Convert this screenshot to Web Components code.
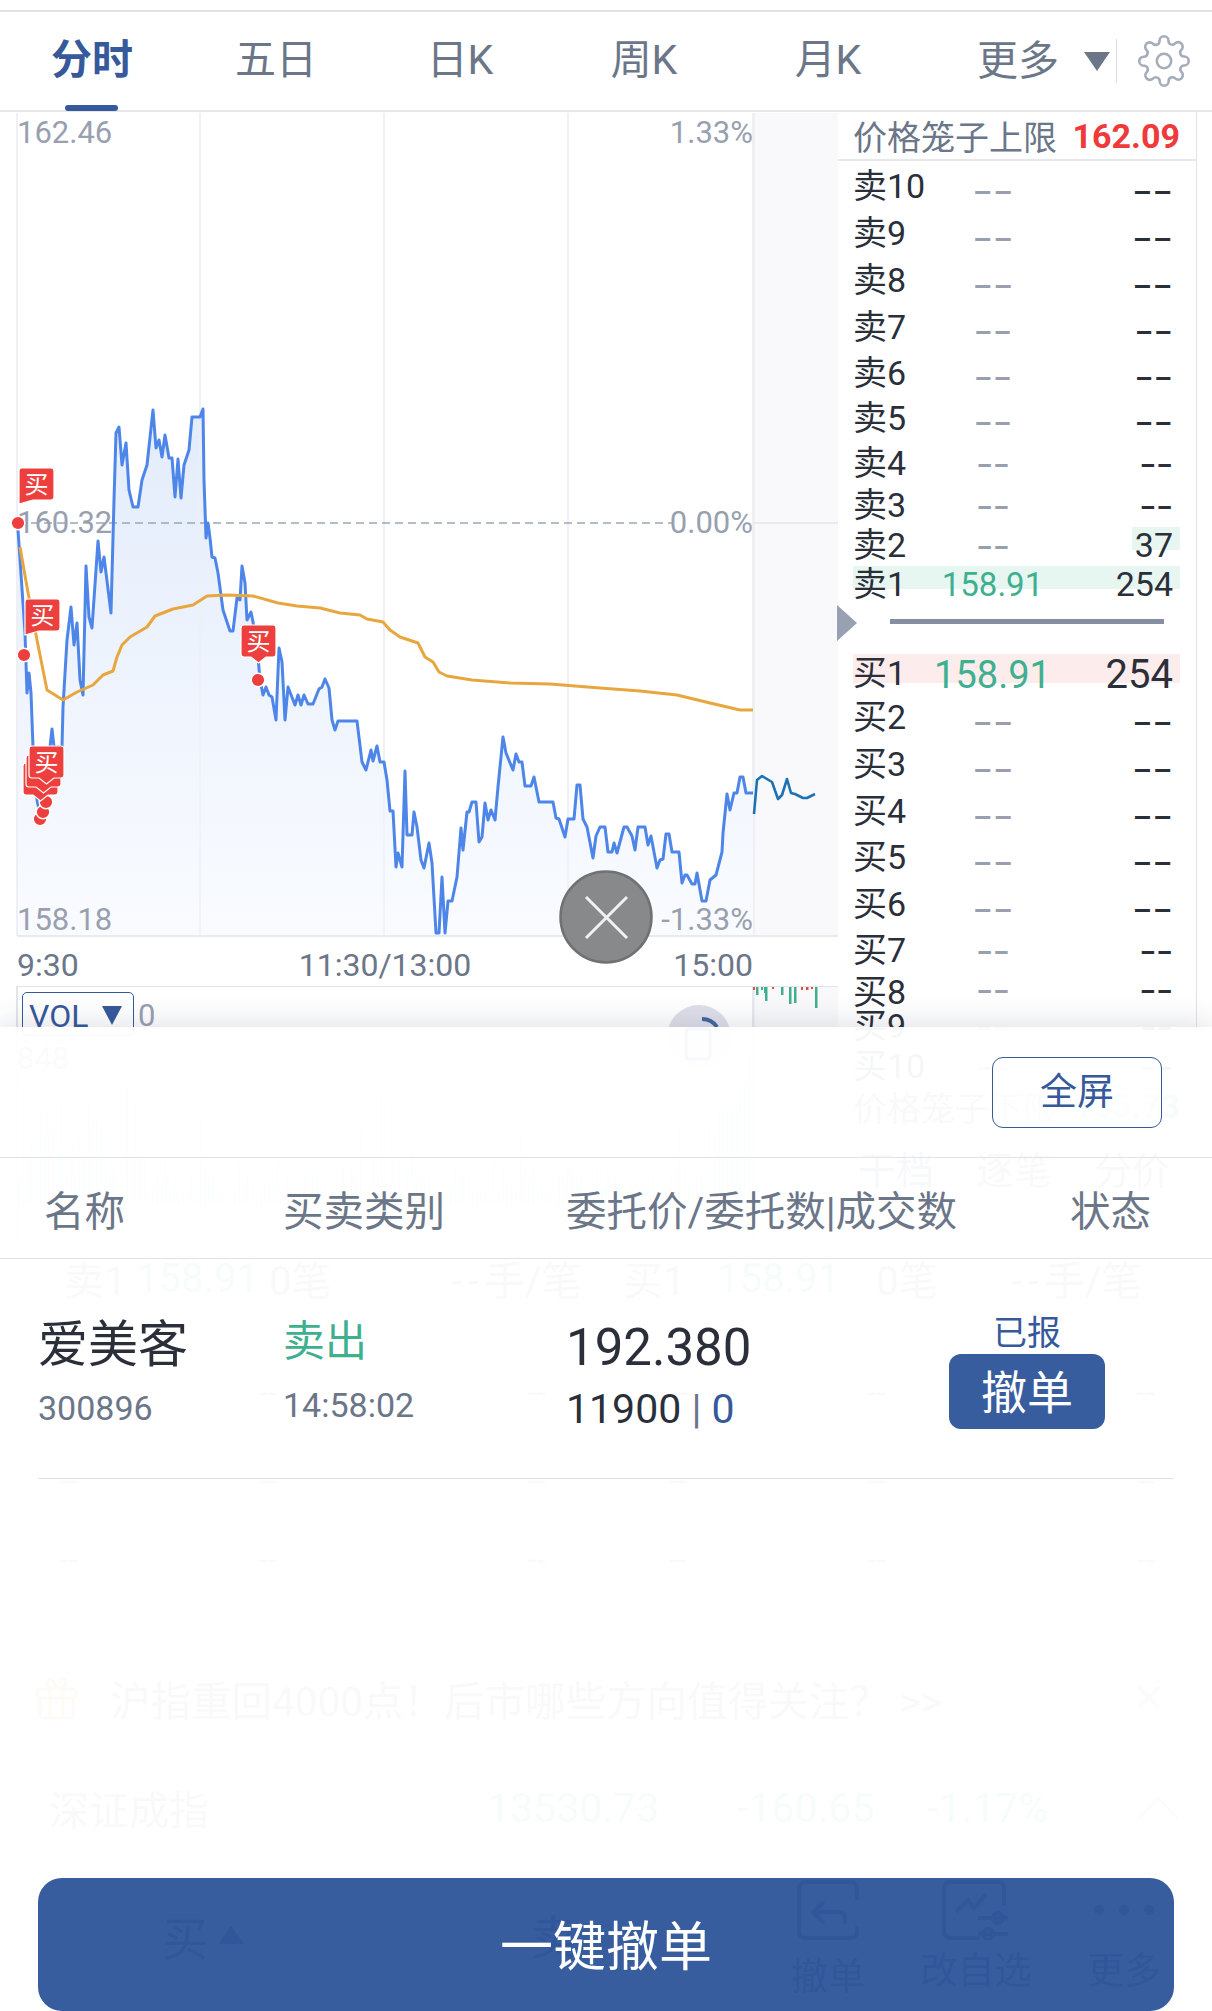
<!DOCTYPE html>
<html lang="zh">
<head>
<meta charset="utf-8">
<title>分时</title>
<style>
  html, body { margin: 0; padding: 0; background: #fff; }
  body { font-family: Roboto, "Noto Sans CJK SC", sans-serif; color: #2a2f3a; }
</style>
</head>
<body>
<stock-page>
  <chart-tabs></chart-tabs>
  <div slot="main">
    <trend-chart></trend-chart>
    <order-book></order-book>
  </div>
  <div slot="under">
    <queue-row></queue-row>
    <dash-row color="#6b7689" h="88"></dash-row>
    <dash-row color="#e24a4a" h="88"></dash-row>
    <dash-row color="#6b7689" h="70"></dash-row>
    <news-bar></news-bar>
    <index-row></index-row>
  </div>
  <close-fab slot="over"></close-fab>
  <order-sheet slot="over"></order-sheet>
</stock-page>

<script>
const BLUE = '#35599b';
const GREEN = '#3fb08f';
const GRAY = '#6b7689';

class StockPage extends HTMLElement {
    constructor() {
        super();
        this.attachShadow({ mode: 'open' });
    }

    connectedCallback() {
        this.shadowRoot.innerHTML = `
      <style>
        :host { display: block; position: relative; width: 1212px; height: 2011px; overflow: hidden; background: #fff; }
        .top { height: 10px; border-bottom: 2px solid #e2e2e2; }
      </style>
      <div class="top"></div>
      <slot></slot>
      <slot name="main"></slot>
      <slot name="under"></slot>
      <slot name="over"></slot>
    `;
        const main = this.querySelector('[slot="main"]');
        main.style.cssText = 'display:flex;height:1128px;';
    }
}

class ChartTabs extends HTMLElement {
    constructor() {
        super();
        this.attachShadow({ mode: 'open' });
    }

    connectedCallback() {
        const tabs = ['分时', '五日', '日K', '周K', '月K'];
        this.shadowRoot.innerHTML = `
      <style>
        :host { display: flex; align-items: center; height: 98px; border-bottom: 2px solid #e6e6e6; font-size: 41px; color: ${GRAY}; }
        .tab { width: 184px; text-align: center; position: relative; line-height: 98px; height: 98px; margin-top: -2px; }
        .tab.on { color: ${BLUE}; font-weight: 700; font-size: 41px; }
        .tab.on::after { content: ''; position: absolute; left: 65px; bottom: -2px; width: 53px; height: 6px; border-radius: 3px; background: ${BLUE}; }
        .more { margin-left: 57px; margin-top: -9px; }
        .tri { width: 0; height: 0; margin-left: 25px; border-left: 13px solid transparent; border-right: 13px solid transparent; border-top: 19px solid ${GRAY}; }
        .div { width: 1px; height: 44px; background: #ddd; margin-left: 6px; }
        svg { margin-left: 20px; margin-top: -1px; }
      </style>
      ${tabs.map((t, i) => `<div class="tab ${i === 0 ? 'on' : ''}">${t}</div>`).join('')}
      <div class="more">更多</div>
      <div class="tri"></div>
      <div class="div"></div>
      <svg width="54" height="54" viewBox="0 0 24 24" fill="none" stroke="#a6adba" stroke-width="1.15">
        <circle cx="12" cy="12" r="3.2"></circle>
        <path d="M19.4 15a1.65 1.65 0 0 0 .33 1.82l.06.06a2 2 0 0 1 0 2.83 2 2 0 0 1-2.83 0l-.06-.06a1.65 1.65 0 0 0-1.82-.33 1.65 1.65 0 0 0-1 1.51V21a2 2 0 0 1-2 2 2 2 0 0 1-2-2v-.09A1.65 1.65 0 0 0 9 19.4a1.65 1.65 0 0 0-1.82.33l-.06.06a2 2 0 0 1-2.83 0 2 2 0 0 1 0-2.83l.06-.06a1.65 1.65 0 0 0 .33-1.82 1.65 1.65 0 0 0-1.51-1H3a2 2 0 0 1-2-2 2 2 0 0 1 2-2h.09A1.65 1.65 0 0 0 4.6 9a1.65 1.65 0 0 0-.33-1.82l-.06-.06a2 2 0 0 1 0-2.83 2 2 0 0 1 2.83 0l.06.06a1.65 1.65 0 0 0 1.82.33H9a1.65 1.65 0 0 0 1-1.51V3a2 2 0 0 1 2-2 2 2 0 0 1 2 2v.09a1.65 1.65 0 0 0 1 1.51 1.65 1.65 0 0 0 1.82-.33l.06-.06a2 2 0 0 1 2.83 0 2 2 0 0 1 0 2.83l-.06.06a1.65 1.65 0 0 0-.33 1.82V9a1.65 1.65 0 0 0 1.51 1H21a2 2 0 0 1 2 2 2 2 0 0 1-2 2h-.09a1.65 1.65 0 0 0-1.51 1z"></path>
      </svg>
    `;
    }
}

const PRICE_LINE = '18,523 18,530 25,633 27,693 29,673 31,693 33,747 37,800 40,815 45,790 50,747 52,729 54,747 62,747 63,707 67,640 71,607 74,645 77,623 80,680 83,695 86,566 89,617 92,628 98,541 101,572 104,557 111,613 114,500 116,433 119,427 122,465 126,443 129,490 133,507 138,507 142,480 147,465 153,410 156,448 159,440 162,457 165,435 169,458 172,458 175,497 178,459 181,498 184,465 189,450 192,417 200,417 203,409 204,480 206,538 208,523 210,538 212,557 215,558 218,573 223,610 230,631 233,631 237,598 240,600 242,566 245,583 247,620 251,612 253,622 258,657 260,680 263,695 266,687 269,695 272,697 276,720 279,648 282,662 285,720 288,687 295,705 298,695 301,705 304,695 308,704 313,704 319,689 322,687 325,679 329,688 332,720 335,730 338,721 357,721 362,762 366,770 371,750 373,761 377,746 380,762 384,762 387,780 390,811 393,811 396,867 398,853 402,867 405,771 407,835 412,835 414,812 417,827 421,860 424,868 429,843 432,863 436,933 439,933 442,877 445,933 448,901 452,901 457,877 461,828 463,850 467,812 469,812 472,802 476,802 479,842 482,837 485,803 488,820 491,810 495,820 498,787 503,737 506,753 513,770 516,754 519,762 522,762 525,786 531,786 534,777 539,802 553,802 556,818 559,819 565,837 568,819 574,819 577,785 580,785 583,819 587,827 593,858 596,836 600,827 605,827 608,852 612,852 614,843 617,853 624,827 627,827 632,836 635,850 638,827 645,827 648,845 651,836 657,868 660,860 663,859 666,834 669,834 672,852 679,852 682,883 685,875 687,875 692,884 695,884 697,873 702,901 706,901 710,880 716,875 722,852 723,833 727,794 730,810 734,793 737,793 740,777 743,777 746,793 753,793';
const LATE_LINE = '754,814 757,780 762,776 772,782 778,799 782,795 787,779 791,793 795,794 803,798 807,798 815,794';
const AVG_LINE = '20,547 27,587 37,640 47,690 63,700 77,692 93,685 103,675 113,671 117,657 122,645 130,637 147,627 155,616 173,609 193,605 207,596 227,595 253,596 278,603 297,606 320,608 340,613 360,615 367,619 383,622 390,630 400,637 418,643 425,657 433,662 439,672 447,676 472,680 510,683 550,684 600,688 640,691 677,695 710,703 740,710 753,710';

// buy flag: left tail sits on the corner, center tail points at its dot
function flag(x, y, kind, label = true) {
    const r = `M${x + 3} ${y}h29a3 3 0 0 1 3 3v26a3 3 0 0 1-3 3`;
    const shape = kind === 'left'
        ? `${r}H${x + 14}L${x} ${y + 36}V${y + 3}a3 3 0 0 1 3-3z`
        : `${r}h-7l-7.5 6-7.5-6h-7a3 3 0 0 1-3-3V${y + 3}a3 3 0 0 1 3-3z`;
    const text = label
        ? `<text x="${x + 17.5}" y="${y + 25}" font-size="24" fill="#fff" text-anchor="middle">买</text>`
        : '';
    return `<path d="${shape}" fill="#ee3f3f" stroke="#fff" stroke-width="1.2"/>${text}`;
}

function dot(x, y) {
    return `<circle cx="${x}" cy="${y}" r="6.8" fill="#ee3f3f" stroke="#fff" stroke-width="1.4"/>`;
}

class TrendChart extends HTMLElement {
    constructor() {
        super();
        this.attachShadow({ mode: 'open' });
    }

    getVolumeBars() {
        let out = '';
        for (let i = 0; i < 170; i++) {
            const x = 19 + i * 4.32;
            const wave = Math.abs(Math.sin(i * 1.7) * Math.cos(i * 0.37));
            let h = 8 + wave * 36;
            if (i < 30) h += wave * 60 + 15;
            if (i % 37 === 5) h += 50;
            if (i > 80 && i < 92) h += wave * 70;
            if (i > 155) h += (i - 155) * 8;
            const c = i % 5 === 2 ? '#e24a4a' : GREEN;
            out += `<line x1="${x}" x2="${x}" y1="1205" y2="${1205 - h}" stroke="${c}" stroke-width="1.5" opacity=".45"/>`;
        }
        return out;
    }

    connectedCallback() {
        const label = 'fill="#98a0b0" font-size="31"';
        this.shadowRoot.innerHTML = `
      <style>
        :host { display: block; width: 838px; flex: none; }
        svg { display: block; }
        .axis { display: grid; grid-template-columns: 1fr auto 1fr; box-sizing: border-box; width: 753px; height: 49px; padding: 6px 0 0 17px; align-items: center; font-size: 32px; color: ${GRAY}; }
        .axis span:last-child { text-align: right; }
        .vol { position: relative; height: 253px; }
        .vol svg { position: absolute; left: 0; top: 0; }
        .tools { position: relative; display: flex; align-items: flex-start; padding: 6px 0 0 22px; }
        .pick { display: flex; align-items: center; box-sizing: border-box; width: 112px; height: 44px; padding: 3px 0 0 6px; border: 1.5px solid ${BLUE}; border-radius: 5px; font-size: 32px; color: ${BLUE}; }
        .pick i { margin-left: 14px; border-left: 10px solid transparent; border-right: 10px solid transparent; border-top: 19px solid ${BLUE}; }
        .zero { margin-left: 4px; font-size: 31px; line-height: 48px; color: #98a0b0; }
        .max { position: relative; padding: 0 0 0 17px; font-size: 31px; color: #98a0b0; }
      </style>
      <svg width="838" height="825" viewBox="0 112 838 825">
        <defs>
          <linearGradient id="fill" x1="0" y1="0" x2="0" y2="1">
            <stop offset="0" stop-color="#e3ecfb"/>
            <stop offset="1" stop-color="#f9fbff"/>
          </linearGradient>
        </defs>
        <rect x="753" y="113" width="85" height="823" fill="#f9f9fb"/>
        <rect x="752" y="113" width="3" height="823" fill="#eef0f4"/>
        <g stroke="#eef0f3" stroke-width="2">
          <line x1="17" x2="17" y1="113" y2="936"/>
          <line x1="200" x2="200" y1="113" y2="936"/>
          <line x1="384" x2="384" y1="113" y2="936"/>
          <line x1="568" x2="568" y1="113" y2="936"/>
        </g>
        <polygon points="18,936 ${PRICE_LINE} 753,936" fill="url(#fill)"/>
        <g stroke="#eef0f3" stroke-width="1.5" opacity=".8">
          <line x1="200" x2="200" y1="417" y2="936"/>
          <line x1="384" x2="384" y1="700" y2="936"/>
          <line x1="568" x2="568" y1="820" y2="936"/>
        </g>
        <line x1="17" x2="838" y1="936" y2="936" stroke="#e8eaee" stroke-width="2"/>
        <line x1="753" x2="838" y1="523" y2="523" stroke="#e8eaee" stroke-width="2"/>
        <line x1="18" x2="672" y1="523" y2="523" stroke="#9aa6ba" stroke-width="1.6" stroke-dasharray="8 5"/>
        <polyline points="${PRICE_LINE}" fill="none" stroke="#4d86e8" stroke-width="3" stroke-linejoin="round"/>
        <polyline points="${LATE_LINE}" fill="none" stroke="#1c72b4" stroke-width="2.6" stroke-linejoin="round"/>
        <polyline points="${AVG_LINE}" fill="none" stroke="#e8a63f" stroke-width="3" stroke-linejoin="round"/>
        <text x="17" y="143" ${label}>162.46</text>
        <text x="753" y="143" ${label} text-anchor="end">1.33%</text>
        <text x="17" y="533" ${label}>160.32</text>
        <text x="753" y="533" ${label} text-anchor="end">0.00%</text>
        <text x="17" y="930" ${label}>158.18</text>
        <text x="753" y="930" ${label} text-anchor="end">-1.33%</text>
        ${flag(19, 468, 'left')}${dot(18, 523)}
        ${flag(25, 599, 'left')}${dot(24, 655)}
        ${dot(40, 819)}${dot(43, 812)}${dot(46, 802)}
        ${flag(23, 763, 'center', false)}
        ${flag(26, 755, 'center', false)}
        ${flag(29, 746, 'center')}
        ${dot(258, 680)}${flag(241, 625, 'center')}
      </svg>
      <div class="axis"><span>9:30</span><span>11:30/13:00</span><span>15:00</span></div>
      <div class="vol">
        <svg width="838" height="253" viewBox="0 987 838 253">
          <rect x="753" y="987" width="85" height="253" fill="#f9f9fb"/>
          <rect x="752" y="987" width="2.5" height="253" fill="#e6e8ee"/>
          <line x1="17" x2="838" y1="987" y2="987" stroke="#e2e4e8" stroke-width="2"/>
          <line x1="17" x2="17" y1="987" y2="1240" stroke="#e2e4e8" stroke-width="2"/>
          <g fill="${GREEN}">
            <rect x="756" y="988" width="2.5" height="8"/><rect x="761" y="988" width="2" height="3"/>
            <rect x="764" y="988" width="2.5" height="6"/><rect x="765" y="988" width="2.5" height="14"/>
            <rect x="781" y="988" width="2.5" height="8"/><rect x="789" y="988" width="2.5" height="17"/>
            <rect x="794" y="988" width="2.5" height="16"/><rect x="815" y="988" width="2.5" height="21"/>
          </g>
          <g fill="#e24a4a">
            <rect x="753" y="988" width="2" height="3"/><rect x="772" y="988" width="2" height="2"/>
            <rect x="801" y="988" width="2" height="3"/><rect x="806" y="988" width="2.5" height="3"/>
            <rect x="811" y="988" width="2" height="2"/>
          </g>
          <circle cx="699" cy="1038" r="32" fill="#dedfe9"/>
          <path d="M702 1020 A18 18 0 0 1 717 1028" fill="none" stroke="#41659f" stroke-width="4"/>
          <rect x="686" y="1030" width="24" height="30" rx="3" fill="none" stroke="#41659f" stroke-width="3"/>
          ${this.getVolumeBars()}
        </svg>
        <div class="tools">
          <div class="pick">VOL<i></i></div>
          <div class="zero">0</div>
        </div>
        <div class="max">848</div>
      </div>
    `;
    }
}

class BookRow extends HTMLElement {
    constructor() {
        super();
        this.attachShadow({ mode: 'open' });
    }

    connectedCallback() {
        const h = this.getAttribute('h');
        const d = this.getAttribute('dash') || '1.7';
        const shift = this.getAttribute('shift') || (d >= 1.7 ? 4 : d >= 1.6 ? 3 : 0);
        this.shadowRoot.innerHTML = `
      <style>
        :host { display: grid; grid-template-columns: 84px 110px 1fr; align-items: center; box-sizing: border-box; height: ${h}px; padding: 4px 23px 0 15px; font-size: 34px; line-height: 1; color: #2a2f3a; }
        .p { text-align: center; color: ${GREEN}; white-space: nowrap; display: flex; justify-content: center; font-size: 33px; padding-left: 1px; }
        .v { text-align: right; white-space: nowrap; }
        .dash { display: inline-block; font-family: "Liberation Sans", sans-serif; font-size: 36px; transform: translateY(${shift}px) scaleX(${d}); }
        .p .dash { color: #9a9fb0; }
        .v .dash { transform-origin: right center; color: #2a2f3a; }
        .lab { white-space: nowrap; }
      </style>
      <span class="lab"><slot></slot></span>
      <span class="p">${this.cell('p')}</span>
      <span class="v">${this.cell('v')}</span>
    `;
    }

    cell(name) {
        const text = this.getAttribute(name);
        if (!text) return '<span class="dash">--</span>';
        return text;
    }
}

class OrderBook extends HTMLElement {
    constructor() {
        super();
        this.attachShadow({ mode: 'open' });
    }

    connectedCallback() {
        const row = (l, h, d, extra = '') => `<book-row h="${h}" dash="${d}" ${extra}>${l}</book-row>`;
        const tint = (x, y, w, hh, c) => `background: linear-gradient(${c},${c}) no-repeat ${x}px ${y}px / ${w}px ${hh}px;`;
        this.shadowRoot.innerHTML = `
      <style>
        :host { display: block; position: relative; width: 358px; box-sizing: content-box; flex: none; height: 1128px; border-right: 1px solid #e2e2e2; overflow: visible; }
        .cage { display: flex; justify-content: space-between; align-items: center; height: 47px; padding: 0 16px 0 15px; border-bottom: 2px solid #e6e8ec; font-size: 34px; color: ${GRAY}; }
        .cage b { color: #ee3a3a; font-size: 34px; font-weight: 700; }
        .cage .g { color: ${GREEN}; }
        .sep { height: 44px; display: flex; align-items: center; padding-left: 52px; }
        .sep i { display: block; width: 274px; height: 5px; background: #868ea3; }
        .arrow { position: absolute; left: -1px; top: 493px; border-top: 18px solid transparent; border-bottom: 18px solid transparent; border-left: 20px solid #98a0b2; }
        .tabs { display: flex; padding: 10px 0 0 20px; font-size: 38px; color: ${GRAY}; gap: 42px; }
        .tabs span:first-child { color: ${BLUE}; }
      </style>
      <div class="cage"><span>价格笼子上限</span><b>162.09</b></div>
      ${row('卖10', 46, 1.7)}
      ${row('卖9', 47, 1.7)}
      ${row('卖8', 47, 1.7)}
      ${row('卖7', 47, 1.6)}
      ${row('卖6', 45, 1.6)}
      ${row('卖5', 45, 1.6)}
      ${row('卖4', 45, 1.4)}
      ${row('卖3', 40, 1.4)}
      ${row('卖2', 40, 1.4, 'v="37" style="' + tint(294, 4, 48, 23, '#e7f6f1') + '"')}
      ${row('卖1', 36, 1.4, 'p="158.91" v="254" style="' + tint(15, 3, 327, 23, '#e7f6f1') + '"')}
      <div class="sep"><i></i></div>
      ${row('买1', 48, 1.4, 'p="<span style=\'font-size:38px;padding-top:4px\'>158.91</span>" v="<span style=\'font-size:40px;display:inline-block;padding-top:4px\'>254</span>" style="padding-top:8px;' + tint(15, 11, 327, 29, '#fdecec') + '"')}
      ${row('买2', 47, 1.7)}
      ${row('买3', 47, 1.7)}
      ${row('买4', 47, 1.7)}
      ${row('买5', 46, 1.7)}
      ${row('买6', 47, 1.7)}
      ${row('买7', 45, 1.4)}
      ${row('买8', 34, 1.4, 'shift="-3"')}
      ${row('买9', 40, 1.4)}
      ${row('买10', 38, 1.4)}
      <div class="cage" style="border:0;height:48px"><span>价格笼子下限</span><b class="g">155.73</b></div>
      <div class="tabs"><span>干档</span><span>逐笔</span><span>分价</span></div>
      <div class="arrow"></div>
    `;
    }
}

class QueueRow extends HTMLElement {
    constructor() {
        super();
        this.attachShadow({ mode: 'open' });
    }

    connectedCallback() {
        const hand = '<span><span class="d">--</span>手/笔</span>';
        this.shadowRoot.innerHTML = `
      <style>
        :host { display: grid; grid-template-columns: 72px 133px 182px 172px 94px 159px 135px auto; height: 76px; padding-left: 64px; align-items: center; font-size: 40px; color: ${GRAY}; white-space: nowrap; }
        .g { color: ${GREEN}; }
        .d { letter-spacing: 6px; }
      </style>
      <span>卖1</span><span class="g">158.91</span><span>0笔</span>${hand}
      <span>买1</span><span class="g">158.91</span><span>0笔</span>${hand}
    `;
    }
}

class DashRow extends HTMLElement {
    constructor() {
        super();
        this.attachShadow({ mode: 'open' });
    }

    connectedCallback() {
        const c = this.getAttribute('color');
        const h = this.getAttribute('h');
        const xs = [80, 199, 269, 141, 199, 269];
        this.shadowRoot.innerHTML = `
      <style>
        :host { display: flex; height: ${h}px; align-items: center; font-size: 32px; color: ${c}; }
        :host(:first-of-type) { margin-top: 32px; }
      </style>
      ${xs.map(x => `<span style="margin-left:${x - 20}px;width:20px">--</span>`).join('')}
    `;
    }
}

class NewsBar extends HTMLElement {
    constructor() {
        super();
        this.attachShadow({ mode: 'open' });
    }

    connectedCallback() {
        this.shadowRoot.innerHTML = `
      <style>
        :host { display: flex; align-items: center; height: 80px; margin-top: 64px; padding-left: 35px; font-size: 40.5px; color: ${GRAY}; white-space: nowrap; }
        svg { flex: none; margin-right: 32px; }
        .x { margin-left: auto; margin-right: 46px; font-size: 40px; color: #9aa3b5; }
      </style>
      <svg width="43" height="44" viewBox="0 0 43 44" fill="none" stroke="#e8a63f" stroke-width="3">
        <rect x="2" y="13" width="39" height="9" rx="3"></rect>
        <rect x="5" y="22" width="33" height="20" rx="3"></rect>
        <path d="M15 13V42M28 13V42M21 13C15 13 11 9 12 5C13 1 19 3 21 13C23 3 30 1 31 5C32 9 27 13 21 13"></path>
      </svg>
      <span>沪指重回4000点！后市哪些方向值得关注？ &gt;&gt;</span>
      <span class="x">✕</span>
    `;
    }
}

class IndexRow extends HTMLElement {
    constructor() {
        super();
        this.attachShadow({ mode: 'open' });
    }

    connectedCallback() {
        this.shadowRoot.innerHTML = `
      <style>
        :host { display: grid; grid-template-columns: 438px 250px 190px 210px auto; height: 80px; margin-top: 30px; padding-left: 49px; align-items: center; font-size: 41px; color: ${GREEN}; }
        .n { color: ${GRAY}; font-size: 40px; }
      </style>
      <span class="n">深证成指</span><span>13530.73</span><span>-160.65</span><span>-1.17%</span>
      <svg width="42" height="24" viewBox="0 0 42 24" fill="none" stroke="#9aa3b5" stroke-width="2"><path d="M1 23L21 2L41 23"></path></svg>
    `;
    }
}

class CloseFab extends HTMLElement {
    constructor() {
        super();
        this.attachShadow({ mode: 'open' });
    }

    connectedCallback() {
        this.shadowRoot.innerHTML = `
      <style>
        :host { position: absolute; left: 559px; top: 870px; width: 94px; height: 94px; display: block; }
        svg { display: block; }
      </style>
      <svg width="94" height="94" viewBox="0 0 94 94">
        <circle cx="47" cy="47" r="45.5" fill="#87898b" stroke="#6f7173" stroke-width="2.5"></circle>
        <path d="M27 27L68 68M68 27L27 68" stroke="#f1f1f1" stroke-width="3" fill="none"></path>
      </svg>
    `;
    }
}

class BarGhost extends HTMLElement {
    constructor() {
        super();
        this.attachShadow({ mode: 'open' });
    }

    connectedCallback() {
        const c = '#31569a';
        this.shadowRoot.innerHTML = `
      <style>
        :host { position: absolute; inset: 0; display: flex; color: ${c}; font-size: 46px; }
        .buy { position: absolute; left: 124px; top: 24px; display: flex; align-items: center; }
        .buy i { margin-left: 10px; border-left: 13px solid transparent; border-right: 13px solid transparent; border-bottom: 18px solid ${c}; }
        .sell { position: absolute; left: 492px; top: 23px; }
        .col { position: absolute; top: 0; width: 148px; text-align: center; font-size: 37px; line-height: 1; }
        svg { display: block; margin: 2px auto 13px; }
      </style>
      <div class="buy">买<i></i></div>
      <div class="sell">卖</div>
      <div class="col" style="left:716px">
        <svg style="margin-bottom:19px" width="62" height="60" viewBox="0 0 62 60" fill="none" stroke="${c}" stroke-width="4">
          <path d="M60 20V8a6 6 0 0 0-6-6H8a6 6 0 0 0-6 6v44a6 6 0 0 0 6 6h46a6 6 0 0 0 6-6v-6"></path>
          <path d="M48 44V38a6 6 0 0 0-6-6H18M27 22L16 32L27 43"></path>
        </svg>撤单
      </div>
      <div class="col" style="left:864px">
        <svg width="68" height="60" viewBox="0 0 68 60" fill="none" stroke="${c}" stroke-width="4">
          <path d="M62 26V8a6 6 0 0 0-6-6H8a6 6 0 0 0-6 6v44a6 6 0 0 0 6 6h30"></path>
          <path d="M14 32L26 20L32 28L44 14M36 38H66M36 54H66"></path>
          <circle cx="56" cy="38" r="5"></circle><circle cx="46" cy="54" r="5"></circle>
        </svg>改自选
      </div>
      <div class="col" style="left:1012px">
        <svg width="62" height="60" viewBox="0 0 62 60" fill="${c}" stroke="none">
          <circle cx="6" cy="30" r="5"></circle><circle cx="31" cy="30" r="5"></circle><circle cx="56" cy="30" r="5"></circle>
        </svg>更多
      </div>
    `;
    }
}

class OrderSheet extends HTMLElement {
    constructor() {
        super();
        this.attachShadow({ mode: 'open' });
    }

    connectedCallback() {
        this.shadowRoot.innerHTML = `
      <style>
        :host { position: absolute; left: 0; top: 1027px; width: 1212px; height: 984px; display: flex; flex-direction: column; background: rgba(255,255,255,.955); box-shadow: 0 -5px 26px rgba(50,60,90,.14); }
        .bar { display: flex; justify-content: flex-end; height: 130px; box-sizing: content-box; padding: 0 50px 0 0; border-bottom: 1px solid #e3e3e6; }
        .full { box-sizing: border-box; width: 170px; height: 71px; margin-top: 30px; border: 1.5px solid ${BLUE}; border-radius: 11px; font-size: 37px; line-height: 70px; text-align: center; color: ${BLUE}; background: rgba(255,255,255,.5); }
        .head { display: grid; grid-template-columns: 239px 283px 504px auto; align-items: center; height: 100px; padding-left: 44px; border-bottom: 1px solid #e3e3e6; font-size: 40.5px; color: ${GRAY}; white-space: nowrap; }
        .row { display: grid; grid-template-columns: 245px 283px 383px 156px; height: 220px; margin: 0 38px 0 38px; border-bottom: 1px solid #e3e3e6; padding-top: 54px; box-sizing: border-box; }
        .row > div { display: flex; flex-direction: column; }
        .big { font-size: 50px; line-height: 64px; margin-bottom: -4px; color: #2a2f3a; }
        .sub { font-size: 34px; line-height: 70px; color: ${GRAY}; }
        .sell { font-size: 42px; line-height: 58px; color: ${GREEN}; }
        .time { font-size: 34px; line-height: 68px; color: ${GRAY}; }
        .price { font-size: 51px; line-height: 70px; color: #2a2f3a; }
        .qty { font-size: 41px; line-height: 52px; color: #2a2f3a; }
        .qty i { font-style: normal; color: ${GRAY}; }
        .qty em { font-style: normal; color: ${BLUE}; }
        .stat { align-items: center; font-size: 34px; line-height: 40px; color: ${BLUE}; }
        .undo { box-sizing: border-box; width: 156px; height: 75px; margin-top: 1px; border-radius: 12px; background: #385d9f; color: #fff; font-size: 46px; line-height: 78px; text-align: center; }
        .go { position: relative; margin: auto 38px 0; height: 133px; border-radius: 24px; background: #385d9f; overflow: hidden; }
        .go span { position: relative; display: block; text-align: center; font-size: 53px; line-height: 140px; color: #fff; }
      </style>
      <div class="bar"><div class="full">全屏</div></div>
      <div class="head"><span>名称</span><span>买卖类别</span><span>委托价/委托数|成交数</span><span>状态</span></div>
      <div class="row">
        <div><span class="big">爱美客</span><span class="sub">300896</span></div>
        <div><span class="sell">卖出</span><span class="time">14:58:02</span></div>
        <div><span class="price">192.380</span><span class="qty">11900 <i>|</i> <em>0</em></span></div>
        <div class="stat"><span>已报</span><div class="undo">撤单</div></div>
      </div>
      <div class="go"><bar-ghost></bar-ghost><span>一键撤单</span></div>
    `;
    }
}

customElements.define('stock-page', StockPage);
customElements.define('chart-tabs', ChartTabs);
customElements.define('trend-chart', TrendChart);
customElements.define('book-row', BookRow);
customElements.define('order-book', OrderBook);
customElements.define('queue-row', QueueRow);
customElements.define('dash-row', DashRow);
customElements.define('news-bar', NewsBar);
customElements.define('index-row', IndexRow);
customElements.define('close-fab', CloseFab);
customElements.define('bar-ghost', BarGhost);
customElements.define('order-sheet', OrderSheet);
</script>
</body>
</html>
